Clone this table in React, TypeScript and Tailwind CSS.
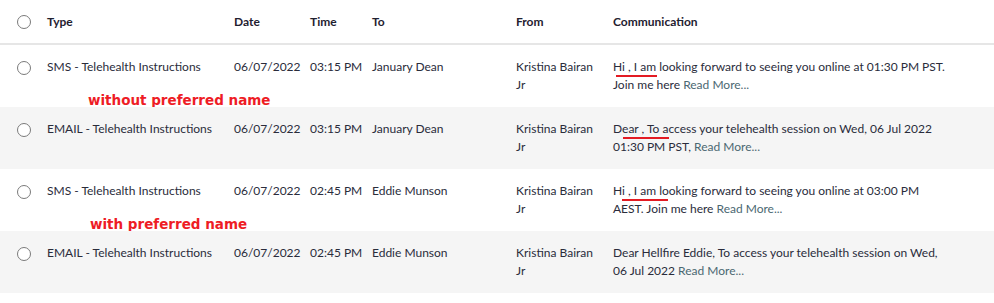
import React from 'react';

type Row = {
  type: string;
  date: string;
  time: string;
  to: string;
  from: string;
  message: string;
  underline?: { left: number; width: number };
  note?: { text: string; left: number };
  shaded: boolean;
};

const rows: Row[] = [
  {
    type: 'SMS - Telehealth Instructions',
    date: '06/07/2022',
    time: '03:15 PM',
    to: 'January Dean',
    from: 'Kristina Bairan Jr',
    message: 'Hi , I am looking forward to seeing you online at 01:30 PM PST. Join me here',
    underline: { left: 3, width: 41 },
    note: { text: 'without preferred name', left: 88 },
    shaded: false,
  },
  {
    type: 'EMAIL - Telehealth Instructions',
    date: '06/07/2022',
    time: '03:15 PM',
    to: 'January Dean',
    from: 'Kristina Bairan Jr',
    message: 'Dear , To access your telehealth session on Wed, 06 Jul 2022 01:30 PM PST,',
    underline: { left: 10, width: 46 },
    shaded: true,
  },
  {
    type: 'SMS - Telehealth Instructions',
    date: '06/07/2022',
    time: '02:45 PM',
    to: 'Eddie Munson',
    from: 'Kristina Bairan Jr',
    message: 'Hi , I am looking forward to seeing you online at 03:00 PM AEST. Join me here',
    underline: { left: 9, width: 46 },
    note: { text: 'with preferred name', left: 90 },
    shaded: false,
  },
  {
    type: 'EMAIL - Telehealth Instructions',
    date: '06/07/2022',
    time: '02:45 PM',
    to: 'Eddie Munson',
    from: 'Kristina Bairan Jr',
    message: 'Dear Hellfire Eddie, To access your telehealth session on Wed, 06 Jul 2022',
    shaded: true,
  },
];

const cols = 'grid grid-cols-[47px_187px_76px_62px_144px_97px_352px]';

function Radio() {
  return <span className="block h-[14px] w-[14px] rounded-full border border-[#7a7a7a] bg-white" />;
}

export default function App() {
  return (
    <div className="w-[994px] h-[303px] bg-white text-[12px] leading-[18px] text-[#2a2c3b] font-['Lato','Open_Sans',sans-serif]">
      {/* Header */}
      <div className={`${cols} h-[45px] items-center border-b-2 border-[#e6e6e6] font-bold text-[#1f2130]`}>
        <div className="flex justify-center pl-[1px]">
          <Radio />
        </div>
        <div>Type</div>
        <div>Date</div>
        <div>Time</div>
        <div>To</div>
        <div>From</div>
        <div>Communication</div>
      </div>

      {rows.map((r, i) => (
        <div key={i} className={`relative ${cols} h-[62px] pt-[13px] ${r.shaded ? 'bg-[#f5f5f5]' : 'bg-white'}`}>
          <div className="flex justify-center pl-[1px] pt-[3px]">
            <Radio />
          </div>
          <div>{r.type}</div>
          <div>{r.date}</div>
          <div>{r.time}</div>
          <div>{r.to}</div>
          <div className="pr-3">{r.from}</div>
          <div className="relative pr-4">
            <p>
              {r.message} <span className="text-[#4b6872]">Read More...</span>
            </p>
            {r.underline && (
              <span
                className="absolute top-[17px] h-[2px] bg-[#e31b23]"
                style={{ left: r.underline.left, width: r.underline.width }}
              />
            )}
          </div>
          {r.note && (
            <span
              className="absolute top-[48px] text-[13.5px] leading-[15px] font-bold text-[#ee1c25] font-['DejaVu_Sans',sans-serif]"
              style={{ left: r.note.left }}
            >
              {r.note.text}
            </span>
          )}
        </div>
      ))}
    </div>
  );
}
